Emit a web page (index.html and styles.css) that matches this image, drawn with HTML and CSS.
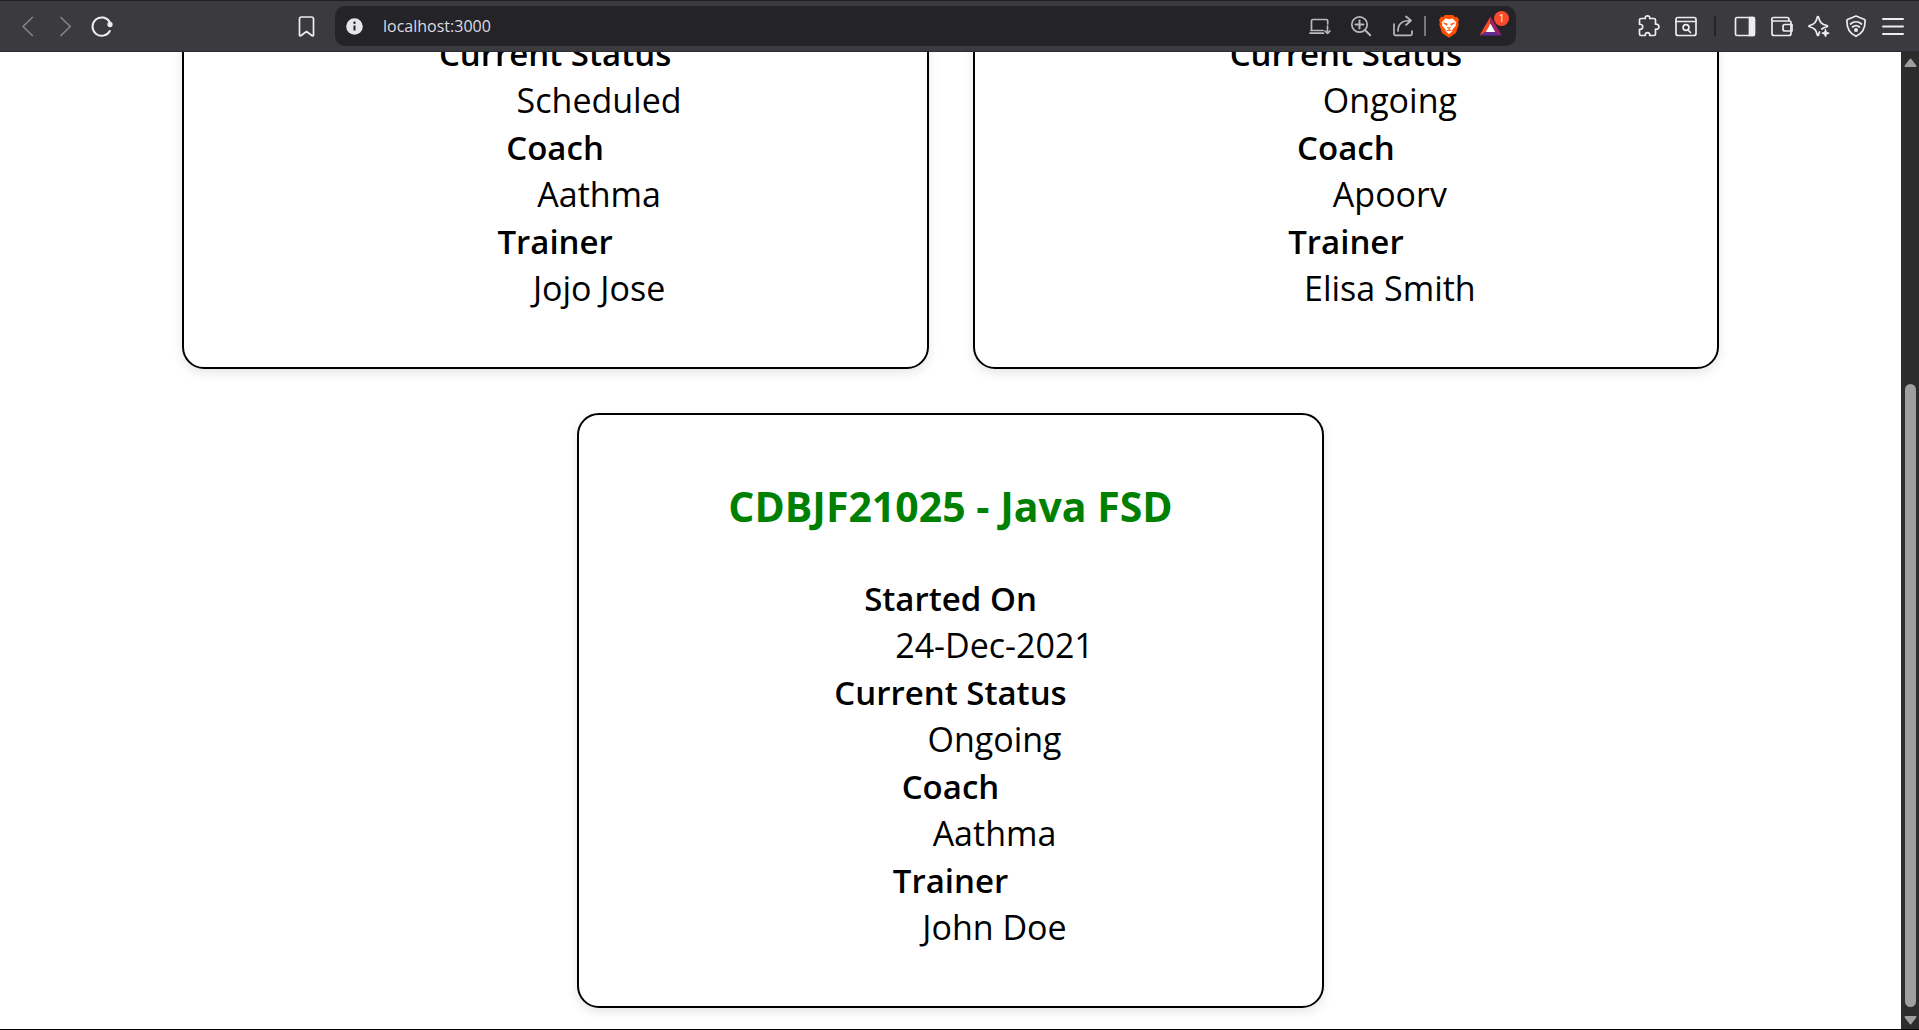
FILE: index.html
```html
<!DOCTYPE html>
<html lang="en">
<head>
<meta charset="utf-8">
<meta name="viewport" content="width=device-width, initial-scale=1">
<title>localhost:3000</title>
<link rel="stylesheet" href="styles.css">
</head>
<body>
<header class="toolbar">
  <nav class="group nav-group" aria-label="Navigation">
    <button class="icon-btn dim" aria-label="Back"><svg viewBox="0 0 24 24"><path d="M17.3 3.5 8 12.5l9.3 9"/></svg></button>
    <button class="icon-btn dim" aria-label="Forward"><svg viewBox="0 0 24 24"><path d="M8 3.5l9.3 9-9.3 9"/></svg></button>
    <button class="icon-btn" aria-label="Reload"><svg viewBox="0 0 24 24"><path d="M18.8 8.2A9.2 9.2 0 1 0 18.8 17" stroke-width="2"/><circle class="solid" cx="19" cy="10.500" r="1.800"/></svg></button>
  </nav>
  <button class="icon-btn" aria-label="Bookmark this page"><svg viewBox="0 0 24 24"><path d="M5.5 21V5a2 2 0 0 1 2-2h10a2 2 0 0 1 2 2v16a.8.8 0 0 1-1.3.7l-5.7-4.2-5.7 4.2A.8.8 0 0 1 5.500 21z"/></svg></button>
  <div class="address">
    <button class="info-btn" aria-label="Site information"><svg viewBox="0 0 24 24"><circle class="solid" cx="12.500" cy="12.500" r="8.300"/><path class="info-mark" d="M12.500 11.500v5"/><circle class="info-dot" cx="12.500" cy="8.800" r="1.200"/></svg></button>
    <input class="url" type="text" value="localhost:3000" aria-label="Address">
    <div class="group address-actions">
      <button class="icon-btn soft" aria-label="Install app"><svg viewBox="0 0 24 24"><path d="M4.500 16.500V7a1.500 1.500 0 0 1 1.500-1.500h13.200a1.500 1.500 0 0 1 1.500 1.500v3M4 16.500h12M3 19.200h13.500M20.500 12v7.300M18 17l2.500 2.500L23 17"/></svg></button>
      <button class="icon-btn soft" aria-label="Zoom"><svg viewBox="0 0 24 24"><circle cx="10.500" cy="10.500" r="7.700"/><path d="M16.200 16.200l5 5M10.500 6.500v8M6.500 10.500h8" stroke-width="2"/></svg></button>
      <button class="icon-btn soft" aria-label="Share"><svg viewBox="0 0 24 24"><path d="M3 10v10a1.300 1.300 0 0 0 1.300 1.300h15.400A1.300 1.300 0 0 0 21 20v-3M7 17c0-7 4-10.500 12.500-10.500M15 2.500l5 4-5 4.500"/></svg></button>
      <span class="divider light"></span>
      <button class="icon-btn" aria-label="Brave Shields"><svg viewBox="0 0 24 24"><path d="M8 1h8l2 2 2-.3L22 6l-.8 2.300.5 2.200-2.700 8.500L12 23.800 5 19 2.300 10.500l.5-2.200L2 6l2-3.300 2 .3z" fill="#ff5000" stroke="none"/><path d="M8.500 4.500l3.500.7 3.500-.7 4 4-1 1.500.5 1.500-3.700 4.200.2 1.300L12 20.300 8.500 17l.2-1.300L5 11.500l.5-1.500-1-1.500z" fill="#fff" stroke="none"/><path d="M6.800 9l3.400.9-.5 1.200zM17.200 9l-3.400.9.5 1.200zM10.300 13.600l1.700.8 1.700-.8M9.800 16.800l2.200-1.200 2.200 1.200" fill="#ff5000" stroke="#ff5000" stroke-width=".8"/></svg></button>
      <button class="icon-btn rewards" aria-label="Brave Rewards"><svg viewBox="0 0 24 24"><path d="M11.500 2.500.500 21.500 7 18l4.500-8z" fill="#ff4724"/><path d="M11.500 2.500l11.500 19L15.500 18l-4-8z" fill="#9e1f63"/><path d="M.500 21.500H23L15.800 17.500H6.800z" fill="#662d91"/><path d="M11.500 9.500 16.200 18H6.800z" fill="#fff"/></svg><span class="badge">1</span></button>
    </div>
  </div>
  <div class="group tools">
    <button class="icon-btn" aria-label="Extensions"><svg viewBox="0 0 24 24"><path d="M2.500 6a1.500 1.500 0 0 1 1.500-1.500h4.300C7.800 2.800 9 1.800 10.500 1.800s2.700 1 2.200 2.700H17A1.500 1.500 0 0 1 18.500 6v4.200c2-.3 3.500.8 3.500 2.500s-1.500 2.800-3.500 2.500V20a1.500 1.500 0 0 1-1.500 1.500h-4.300c.3-1.800-.8-2.900-2.200-2.900s-2.500 1.100-2.200 2.900H4A1.500 1.500 0 0 1 2.500 20v-4.700c2 .3 3.300-.9 3.300-2.500S4.500 10 2.500 10.300z"/></svg></button>
    <button class="icon-btn" aria-label="Search tabs"><svg viewBox="0 0 24 24"><rect x="2" y="3.500" width="20" height="18" rx="2"/><path d="M2 7.500h20M14 16l2.500 2.500"/><circle cx="12" cy="13.500" r="2.900"/></svg></button>
    <span class="divider dark"></span>
    <button class="icon-btn" aria-label="Sidebar"><svg viewBox="0 0 24 24"><rect x="2.500" y="3.500" width="19" height="18" rx="1.500"/><path class="solid" d="M16.500 3.500H21v18h-4.500z"/></svg></button>
    <button class="icon-btn" aria-label="Wallet"><svg viewBox="0 0 24 24"><path d="M2 6v13.500a2 2 0 0 0 2 2h15a2 2 0 0 0 2-2V8.500a1.500 1.500 0 0 0-1.500-1.500H3.500a1.500 1.500 0 0 1 0-3.500H17a2 2 0 0 1 2 2V7"/><path d="M22 10.500h-7a2 2 0 0 0-2 2v2.500a2 2 0 0 0 2 2h7z"/></svg></button>
    <button class="icon-btn" aria-label="Leo AI"><svg viewBox="0 0 24 24"><path d="M11.500 3c1.300 5.500 3 7.300 8.500 8.500.8.200.8 1 0 1.200-2.500.6-4 1.300-5.200 2.300M11.500 3c-.2-.7-1-.7-1.200 0C9.200 8.200 7.500 10.200 2.500 11.500c-.8.200-.8 1 0 1.200 5 1.200 6.700 3.200 7.800 8.300.2.700 1 .7 1.200 0 .3-1.200.6-2.200 1-3"/><path class="solid" d="M18.500 15.500l1 2.700 2.700 1-2.700 1-1 2.700-1-2.700-2.700-1 2.700-1z" stroke-width="1"/></svg></button>
    <button class="icon-btn" aria-label="VPN"><svg viewBox="0 0 24 24"><path d="M12 2l8.500 3.500a1 1 0 0 1 .6 1C21.300 15 18.500 19.500 12 22.300 5.500 19.500 2.700 15 2.900 6.500a1 1 0 0 1 .6-1z"/><path d="M6.500 10c3.300-2.900 7.700-2.900 11 0M8.500 13c2.200-1.800 4.800-1.800 7 0"/><circle class="solid" cx="12" cy="16" r="1.200"/></svg></button>
    <button class="icon-btn" aria-label="Menu"><svg viewBox="0 0 24 24"><path d="M2 5h20M2 12.500h20M2 20h20" stroke-width="2"/></svg></button>
  </div>
</header>

<div class="viewport">
  <main class="cohorts">
    <section class="card">
      <dl>
        <dt>Current Status</dt><dd>Scheduled</dd>
        <dt>Coach</dt><dd>Aathma</dd>
        <dt>Trainer</dt><dd>Jojo Jose</dd>
      </dl>
    </section>
    <section class="card">
      <dl>
        <dt>Current Status</dt><dd>Ongoing</dd>
        <dt>Coach</dt><dd>Apoorv</dd>
        <dt>Trainer</dt><dd>Elisa Smith</dd>
      </dl>
    </section>
    <section class="card">
      <h3>CDBJF21025 - Java FSD</h3>
      <dl>
        <dt>Started On</dt><dd>24-Dec-2021</dd>
        <dt>Current Status</dt><dd>Ongoing</dd>
        <dt>Coach</dt><dd>Aathma</dd>
        <dt>Trainer</dt><dd>John Doe</dd>
      </dl>
    </section>
  </main>
  <div class="scrollbar" aria-hidden="true">
    <svg class="arrow" viewBox="0 0 18 18"><path d="M9.500 7.500l5 6.500h-10z"/></svg>
    <div class="track"><div class="thumb"></div></div>
    <svg class="arrow" viewBox="0 0 18 18"><path d="M9.500 12.500l5-6.500h-10z"/></svg>
  </div>
</div>
</body>
</html>
```

FILE: styles.css
```css
* { box-sizing: border-box; }

body {
  margin: 0;
  height: 100vh;
  display: flex;
  flex-direction: column;
  overflow: hidden;
  border-bottom: 1px solid #000;
  background: #fff;
  color: #000;
  font-family: "Segoe UI", "Open Sans", "Noto Sans", sans-serif;
}

/* Browser toolbar */
.toolbar {
  flex: none;
  height: 52px;
  display: flex;
  align-items: center;
  padding: 0 8px;
  background: #3b3a3f;
  border-top: 1px solid #1f1e25;
  border-bottom: 1px solid #2c2b2f;
}

.group {
  flex: none;
  display: flex;
  align-items: center;
}

.nav-group { margin-right: 165px; }

.icon-btn,
.info-btn {
  flex: none;
  display: flex;
  align-items: center;
  justify-content: center;
  width: 38px;
  height: 40px;
  padding: 0;
  border: 0;
  background: none;
  color: #ededf0;
}

.icon-btn svg,
.info-btn svg {
  width: 24px;
  height: 24px;
  fill: none;
  stroke: currentColor;
  stroke-width: 1.7;
  stroke-linecap: round;
  stroke-linejoin: round;
}

.icon-btn.dim { color: #848388; }
.icon-btn.soft { color: #b9b8bd; }
.toolbar .solid { fill: currentColor; }

.tools .icon-btn { width: 37px; }

.address {
  flex: 1;
  min-width: 0;
  height: 40px;
  display: flex;
  align-items: center;
  margin: 0 114px 0 10px;
  padding-right: 4px;
  border-radius: 10px;
  background: #242328;
}

.info-btn svg { stroke-width: 2; }
.info-btn .solid { stroke: none; fill: #e6e5ea; }
.info-btn .info-mark { stroke: #242328; stroke-linecap: butt; }
.info-btn .info-dot { stroke: none; fill: #242328; }

.url {
  flex: 1;
  min-width: 0;
  height: 40px;
  padding: 0 10px;
  border: 0;
  outline: 0;
  background: none;
  color: #dcdbe0;
  font: 16px/40px "Segoe UI", "Open Sans", "Noto Sans", sans-serif;
}

.address-actions .icon-btn { width: 42px; }

.divider {
  width: 2px;
  height: 20px;
}

.divider.light {
  margin-right: 2px;
  background: #77767b;
}

.divider.dark {
  margin: 0 10px;
  background: #242328;
}

.rewards { position: relative; }
.rewards svg { stroke: none; }

.badge {
  position: absolute;
  top: 5px;
  right: 3px;
  width: 15px;
  height: 15px;
  border-radius: 50%;
  background: #fb4a2c;
  color: #fff;
  font: 10px/15px "Open Sans", sans-serif;
  text-align: center;
}

/* Page */
.viewport {
  flex: 1;
  min-height: 0;
  display: flex;
}

.cohorts {
  flex: 1;
  min-width: 0;
  display: flex;
  flex-wrap: wrap;
  justify-content: center;
  align-content: flex-end;
  gap: 44px;
  padding: 0 17px 21px;
  overflow: hidden;
}

.card {
  width: 40%;
  padding: 64px 22px 55px;
  border: 2px solid #000;
  border-radius: 22px;
  box-shadow: 0 4px 11px rgba(0, 0, 0, 0.1);
  text-align: center;
}

.card h3 {
  margin: 0 0 41px;
  color: #008000;
  font-size: 41px;
  line-height: 55px;
  font-weight: 700;
}

.card dl {
  margin: 0;
  font-size: 34px;
  line-height: 47px;
}

.card dt {
  font-size: 33px;
  font-weight: 600;
}

.card dd { margin: 0 0 0 88px; }

/* Scrollbar */
.scrollbar {
  flex: none;
  width: 18px;
  display: flex;
  flex-direction: column;
  align-items: center;
  background: #2c2c2c;
}

.arrow {
  flex: none;
  width: 18px;
  height: 18px;
  fill: #9f9f9f;
  stroke: #9f9f9f;
  stroke-width: 2;
  stroke-linejoin: round;
}

.track {
  flex: 1;
  display: flex;
  flex-direction: column;
  justify-content: flex-end;
  padding-bottom: 4px;
}

.thumb {
  width: 11px;
  height: 66.5%;
  margin-left: 1px;
  border-radius: 6px;
  background: #9f9f9f;
}
```
